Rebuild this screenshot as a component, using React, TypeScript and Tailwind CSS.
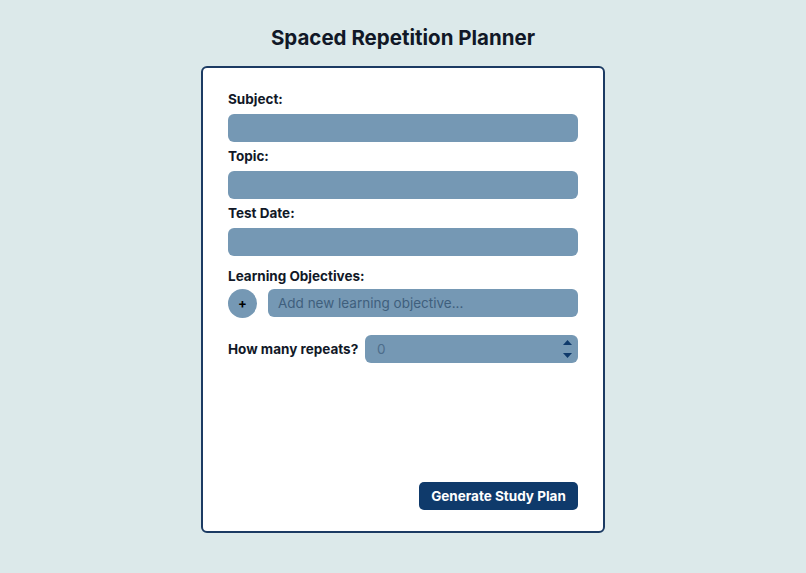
import React from "react";

export default function App() {
  return (
    <div className="min-h-[573px] w-full bg-[#dce9ea] flex flex-col items-center text-[#111827]" style={{ fontFamily: "Inter, 'Noto Sans', sans-serif" }}>
      <h1 className="mt-[25px] text-[20.5px] leading-[25px] font-bold text-[#111827]">Spaced Repetition Planner</h1>
      <div className="mt-[16px] w-[404px] h-[467px] bg-white border-2 border-[#1c3b63] rounded-[6px] px-[25px] pt-[21px] pb-[21px] flex flex-col">
        <label className="block h-[20px] leading-[20px] text-[13.5px] font-bold mb-[5px]">Subject:</label>
        <div className="h-[28px] rounded-[6px] bg-[#7598b4] mb-[4px]" />
        <label className="block h-[20px] leading-[20px] text-[13.5px] font-bold mb-[5px]">Topic:</label>
        <div className="h-[28px] rounded-[6px] bg-[#7598b4] mb-[4px]" />
        <label className="block h-[20px] leading-[20px] text-[13.5px] font-bold mb-[5px]">Test Date:</label>
        <div className="h-[28px] rounded-[6px] bg-[#7598b4]" />
        <label className="block h-[20px] leading-[20px] text-[13.5px] font-bold mt-[10px] mb-[2px]">Learning Objectives:</label>
        <div className="flex items-center gap-[11px] h-[30px]">
          <div className="w-[29px] h-[29px] rounded-full bg-[#7598b4] flex items-center justify-center text-black text-[13px] font-bold leading-none">+</div>
          <div className="flex-1 h-[28px] rounded-[6px] bg-[#7598b4] flex items-center px-[10px] text-[13.5px] text-[#3f5f7d]">Add new learning objective...</div>
        </div>
        <div className="flex items-center justify-between mt-[17px] h-[28px]">
          <span className="text-[13.5px] font-bold whitespace-nowrap">How many repeats?</span>
          <div className="w-[213px] h-[28px] rounded-[6px] bg-[#7598b4] flex items-center pl-[12px] pr-[6px] text-[13.5px] text-[#4d6d8b]">
            <span className="flex-1">0</span>
            <div className="flex flex-col items-center gap-[8px]">
              <svg width="9" height="5" viewBox="0 0 9 5"><path d="M0 5 L4.5 0 L9 5 Z" fill="#0f3a6b" /></svg>
              <svg width="9" height="5" viewBox="0 0 9 5"><path d="M0 0 L4.5 5 L9 0 Z" fill="#0f3a6b" /></svg>
            </div>
          </div>
        </div>
        <div className="flex-1" />
        <div className="flex justify-end">
          <button className="h-[28px] w-[159px] rounded-[5px] bg-[#0f3a6b] text-white text-[13.5px] font-bold">Generate Study Plan</button>
        </div>
      </div>
    </div>
  );
}
